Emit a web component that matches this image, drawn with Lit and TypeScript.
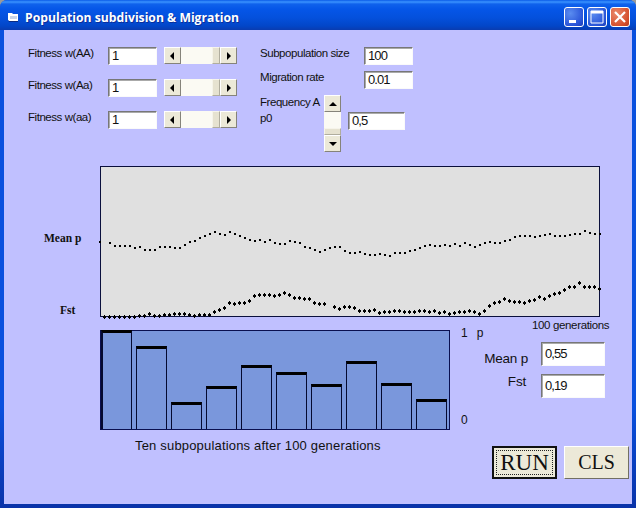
import { LitElement, html, css, svg } from "lit";
import { customElement } from "lit/decorators.js";

const meanStart = 110;
const meanA = [243,246,246,246,246,248,247,250,250,250,247,247,247,248,248,245,242,241,238,236,234,232,234,235,232,234,236,238,240,241,240,242,240,243,244,244,241,242,243,247,248,250,252,250];
const meanB = [248,247,247,251,253,253,252,254,255,255,254,255,256,253,253,253,251,250,248,246,245,246,246,245,246,244,246,243,245,247,245,243,242,243,243,241,240,237,236,236,236,237,236,235,234,236,236,236,235,234,234,231,233,234,234];
const fstStart = 105;
const fstA = [317,317,317,317,317,317,317,316,316,314,316,316,315,315,314,314,314,315,316,315,315,315,312,310,308,303,304,303,303,301,296,295,295,295,296,295,293,295,298,298,299,299,303,304,304];
const fstB = [304,307,309,307,307,308,311,311,311,310,313,312,312,311,311,312,312,312,311,311,312,311,313,312,314,313,312,312,311,312,314,311,306,303,302,299,301,302,302,303,301,300,297,299,296,294,293,290,287,287,283,287,287,287,289];

const bars = [99, 83, 27, 43, 64, 57, 45, 68, 46, 30];

@customElement("app-root")
export class AppRoot extends LitElement {
  static styles = css`
    :host { display: block; width: 636px; height: 508px; background: #9a9a9a; font-family: "Liberation Sans", Arial, sans-serif; font-size: 11.5px; letter-spacing: -0.45px; color: #111; overflow: hidden; }
    .window { width: 636px; height: 508px; box-sizing: border-box; display: flex; flex-direction: column; border-radius: 7px 7px 0 0; overflow: hidden; padding: 0 4px 4px; background: linear-gradient(#0a50de, #0a50de 80%, #0a33a8); }
    .title { height: 30px; box-sizing: border-box; margin: 0 -4px; flex: none; display: flex; align-items: center; padding: 4px 6px 0 8px; color: #fff; font: bold 12.2px "Open Sans", "Liberation Sans", sans-serif; letter-spacing: 0;
      background: linear-gradient(#0a5be8 0, #3a93ff 2px, #0f62ec 4px, #0556e8 9px, #0450dc 18px, #0246c8 26px, #0a3cb0 30px); }
    .title svg { flex: none; }
    .title > svg { margin-right: 6px; }
    .title span { flex: 1; text-shadow: 1px 1px 0 #0a2f9c; }
    .wbtn { width: 20px; height: 20px; box-sizing: border-box; border: 1px solid #fff; border-radius: 3px; margin-left: 3px; display: flex; background: radial-gradient(circle at 30% 30%, #5a8cf0, #2a55d8 70%, #1a3cb8); }
    .wbtn.close { background: radial-gradient(circle at 30% 30%, #ea8a6c, #d5502e 70%, #b83a1a); }
    .client { flex: 1; background: #c0c0ff; display: flex; flex-direction: column; }

    .top { display: flex; height: 136px; padding: 17px 0 0 24px; box-sizing: border-box; }
    .fit { width: 232px; flex: none; }
    .fit-row { display: flex; height: 32px; align-items: flex-start; }
    .fit-row .lbl { width: 80px; line-height: 12px; }
    .fit-row .hs { margin-left: 7px; }
    .mid-row { display: flex; height: 24px; align-items: flex-start; }
    .mid-row .lbl { width: 104px; line-height: 12px; }
    .freq { display: flex; align-items: flex-start; }
    .freq .lbl { width: 64px; line-height: 16px; margin-top: -1px; }
    .freq .tb { margin: 17px 0 0 7px; width: 57px; }

    .tb { box-sizing: border-box; width: 49px; height: 18px; background: #fff; border: 1px solid; border-color: #777 #fafafa #fafafa #777; box-shadow: inset 1px 1px 0 #aaa; font-size: 13px; letter-spacing: -0.9px; line-height: 15px; padding: 0 0 0 3px; color: #111; }
    .hs { display: flex; width: 73px; height: 17px; flex: none; }
    .vs { display: flex; flex-direction: column; width: 17px; height: 57px; flex: none; }
    .track { flex: 1; background: #fbfaf3; }
    .sb { box-sizing: border-box; width: 17px; height: 17px; flex: none; background: #ece9d8; border: 1px solid; border-color: #fff #85837a #85837a #fff; display: flex; align-items: center; justify-content: center; }
    .thumb { box-sizing: border-box; background: #e6e2d0; border: 1px solid; border-color: #f6f4ea #b0ad9e #b0ad9e #f6f4ea; flex: none; }
    .hs .thumb { width: 8px; }
    .vs .thumb { height: 7px; }

    .chart-row { display: flex; height: 151px; }
    .gutter { width: 96px; flex: none; display: flex; flex-direction: column; font: bold 11.5px "Liberation Serif", serif; letter-spacing: 0; color: #111; padding-top: 66px; box-sizing: border-box; }
    .gutter .m { padding-left: 40px; line-height: 12px; }
    .gutter .f { padding-left: 56px; line-height: 12px; margin-top: 60px; }
    .chart { width: 500px; height: 151px; display: block; overflow: visible; flex: none; }
    .gen { height: 13px; padding-left: 528px; line-height: 17px; font-size: 11.5px; letter-spacing: -0.35px; white-space: nowrap; }

    .lower { display: flex; padding-left: 96px; }
    .left { width: 384px; flex: none; }
    .bar-row { display: flex; }
    .bars { box-sizing: border-box; width: 350px; height: 100px; flex: none; background: #7a97dc; border: 1px solid #0a1050; display: flex; align-items: flex-end; gap: 4px; }
    .bar { box-sizing: border-box; width: 31px; flex: none; border: 1px solid #050a30; border-top: 3px solid #000; border-bottom: 0; }
    .bar:first-child { border-left-width: 2px; }
    .axis { flex: 1; display: flex; flex-direction: column; justify-content: space-between; margin-top: -4px; padding-left: 11px; font-size: 12px; letter-spacing: 0; line-height: 14px; height: 101px; }
    .axis .one { display: flex; gap: 9px; }
    .caption { padding: 9px 0 0 35px; font-size: 13px; letter-spacing: 0.18px; line-height: 14px; white-space: nowrap; }
    .right { width: 145px; flex: none; margin-top: 12px; }
    .stat { display: flex; height: 32px; align-items: flex-start; font-size: 13.5px; letter-spacing: -0.2px; }
    .stat .lbl { width: 44px; margin-right: 13px; text-align: right; padding-top: 10px; line-height: 14px; white-space: nowrap; }
    .stat .tb { width: 64px; height: 24px; padding-top: 3px; }
    .stat.fst .lbl { padding: 1px 2px 0 0; margin-right: 13px; width: 42px; }
    .btns { display: flex; gap: 7px; margin-top: 40px; padding-left: 8px; }
    .btn { box-sizing: border-box; width: 65px; height: 33px; background: #ece9d8; font: 20px "Liberation Serif", serif; letter-spacing: 0; color: #111; display: flex; align-items: center; justify-content: center; border: 1px solid; border-color: #fff #716f64 #716f64 #fff; }
    .btn.run { font-size: 23px; border: 2px solid #111; outline: 1px dotted #222; outline-offset: -5px; }
  `;

  private arrow(d: "l" | "r" | "u" | "d") {
    const p = { l: "M5 0V8L1 4Z", r: "M2 0V8L6 4Z", u: "M0 6H8L4 2Z", d: "M0 2H8L4 6Z" }[d];
    return html`<svg width="8" height="8" viewBox="0 0 8 8"><path d=${p} fill="#000"></path></svg>`;
  }

  private hscroll() {
    return html`<div class="hs">
      <div class="sb">${this.arrow("l")}</div>
      <div class="track"></div>
      <div class="thumb"></div>
      <div class="sb">${this.arrow("r")}</div>
    </div>`;
  }

  private chart() {
    const mean = [[100, 242], ...meanA.map((y, i) => [meanStart + i * 5, y]), ...meanB.map((y, i) => [330 + i * 5, y])];
    const fst = [...fstA.map((y, i) => [fstStart + i * 5, y]), ...fstB.slice(1).map((y, i) => [335 + i * 5, y])];
    return html`<svg class="chart" viewBox="0 0 500 151" shape-rendering="crispEdges">
      <rect x="0.5" y="0.5" width="499" height="150" fill="#e0e0e0" stroke="#0a0f3c"></rect>
      ${mean.map(([x, y]) => svg`<rect x=${x - 101} y=${y - 167} width="2" height="2" fill="#000"></rect>`)}
      ${fst.map(([x, y]) => svg`<path d="M${x - 102} ${y - 167}h3v2h-3zM${x - 101} ${y - 168}h1v4h-1z" fill="#000"></path>`)}
    </svg>`;
  }

  render() {
    return html`<div class="window">
      <div class="title">
        <svg width="11" height="10" viewBox="0 0 11 10"><path d="M0 1H4L5 2H10V9H1L0 8Z" fill="#fff"></path><path d="M2 4H9V7H2Z" fill="#c8d4e8"></path><path d="M0 8L1 9H10V10H1Z" fill="#0a2a80"></path></svg>
        <span>Population subdivision &amp; Migration</span>
        <div class="wbtn"><svg width="18" height="18" viewBox="0 0 18 18"><rect x="4" y="12" width="7" height="3" fill="#fff"></rect></svg></div>
        <div class="wbtn"><svg width="18" height="18" viewBox="0 0 18 18"><path d="M3 3H15V15H3Z" fill="none" stroke="#fff" stroke-width="1"></path><rect x="3" y="3" width="12" height="2.5" fill="#fff"></rect></svg></div>
        <div class="wbtn close"><svg width="18" height="18" viewBox="0 0 18 18"><path d="M4 4L14 14M14 4L4 14" stroke="#fff" stroke-width="2.2"></path></svg></div>
      </div>
      <div class="client">
        <div class="top">
          <div class="fit">
            ${["Fitness w(AA)", "Fitness w(Aa)", "Fitness w(aa)"].map(
              (l) => html`<div class="fit-row"><div class="lbl">${l}</div><div class="tb">1</div>${this.hscroll()}</div>`
            )}
          </div>
          <div class="mid">
            <div class="mid-row"><div class="lbl">Subpopulation size</div><div class="tb">100</div></div>
            <div class="mid-row"><div class="lbl">Migration rate</div><div class="tb">0.01</div></div>
            <div class="freq">
              <div class="lbl">Frequency A<br />p0</div>
              <div class="vs">
                <div class="sb">${this.arrow("u")}</div>
                <div class="track"></div>
                <div class="thumb"></div>
                <div class="sb">${this.arrow("d")}</div>
              </div>
              <div class="tb">0,5</div>
            </div>
          </div>
        </div>
        <div class="chart-row">
          <div class="gutter"><div class="m">Mean p</div><div class="f">Fst</div></div>
          ${this.chart()}
        </div>
        <div class="gen">100 generations</div>
        <div class="lower">
          <div class="left">
            <div class="bar-row">
              <div class="bars">${bars.map((h) => html`<div class="bar" style="height:${h}px"></div>`)}</div>
              <div class="axis"><div class="one"><span>1</span><span>p</span></div><div>0</div></div>
            </div>
            <div class="caption">Ten subpopulations after 100 generations</div>
          </div>
          <div class="right">
            <div class="stat"><div class="lbl">Mean p</div><div class="tb">0,55</div></div>
            <div class="stat fst"><div class="lbl">Fst</div><div class="tb">0,19</div></div>
            <div class="btns"><div class="btn run">RUN</div><div class="btn">CLS</div></div>
          </div>
        </div>
      </div>
    </div>`;
  }
}
